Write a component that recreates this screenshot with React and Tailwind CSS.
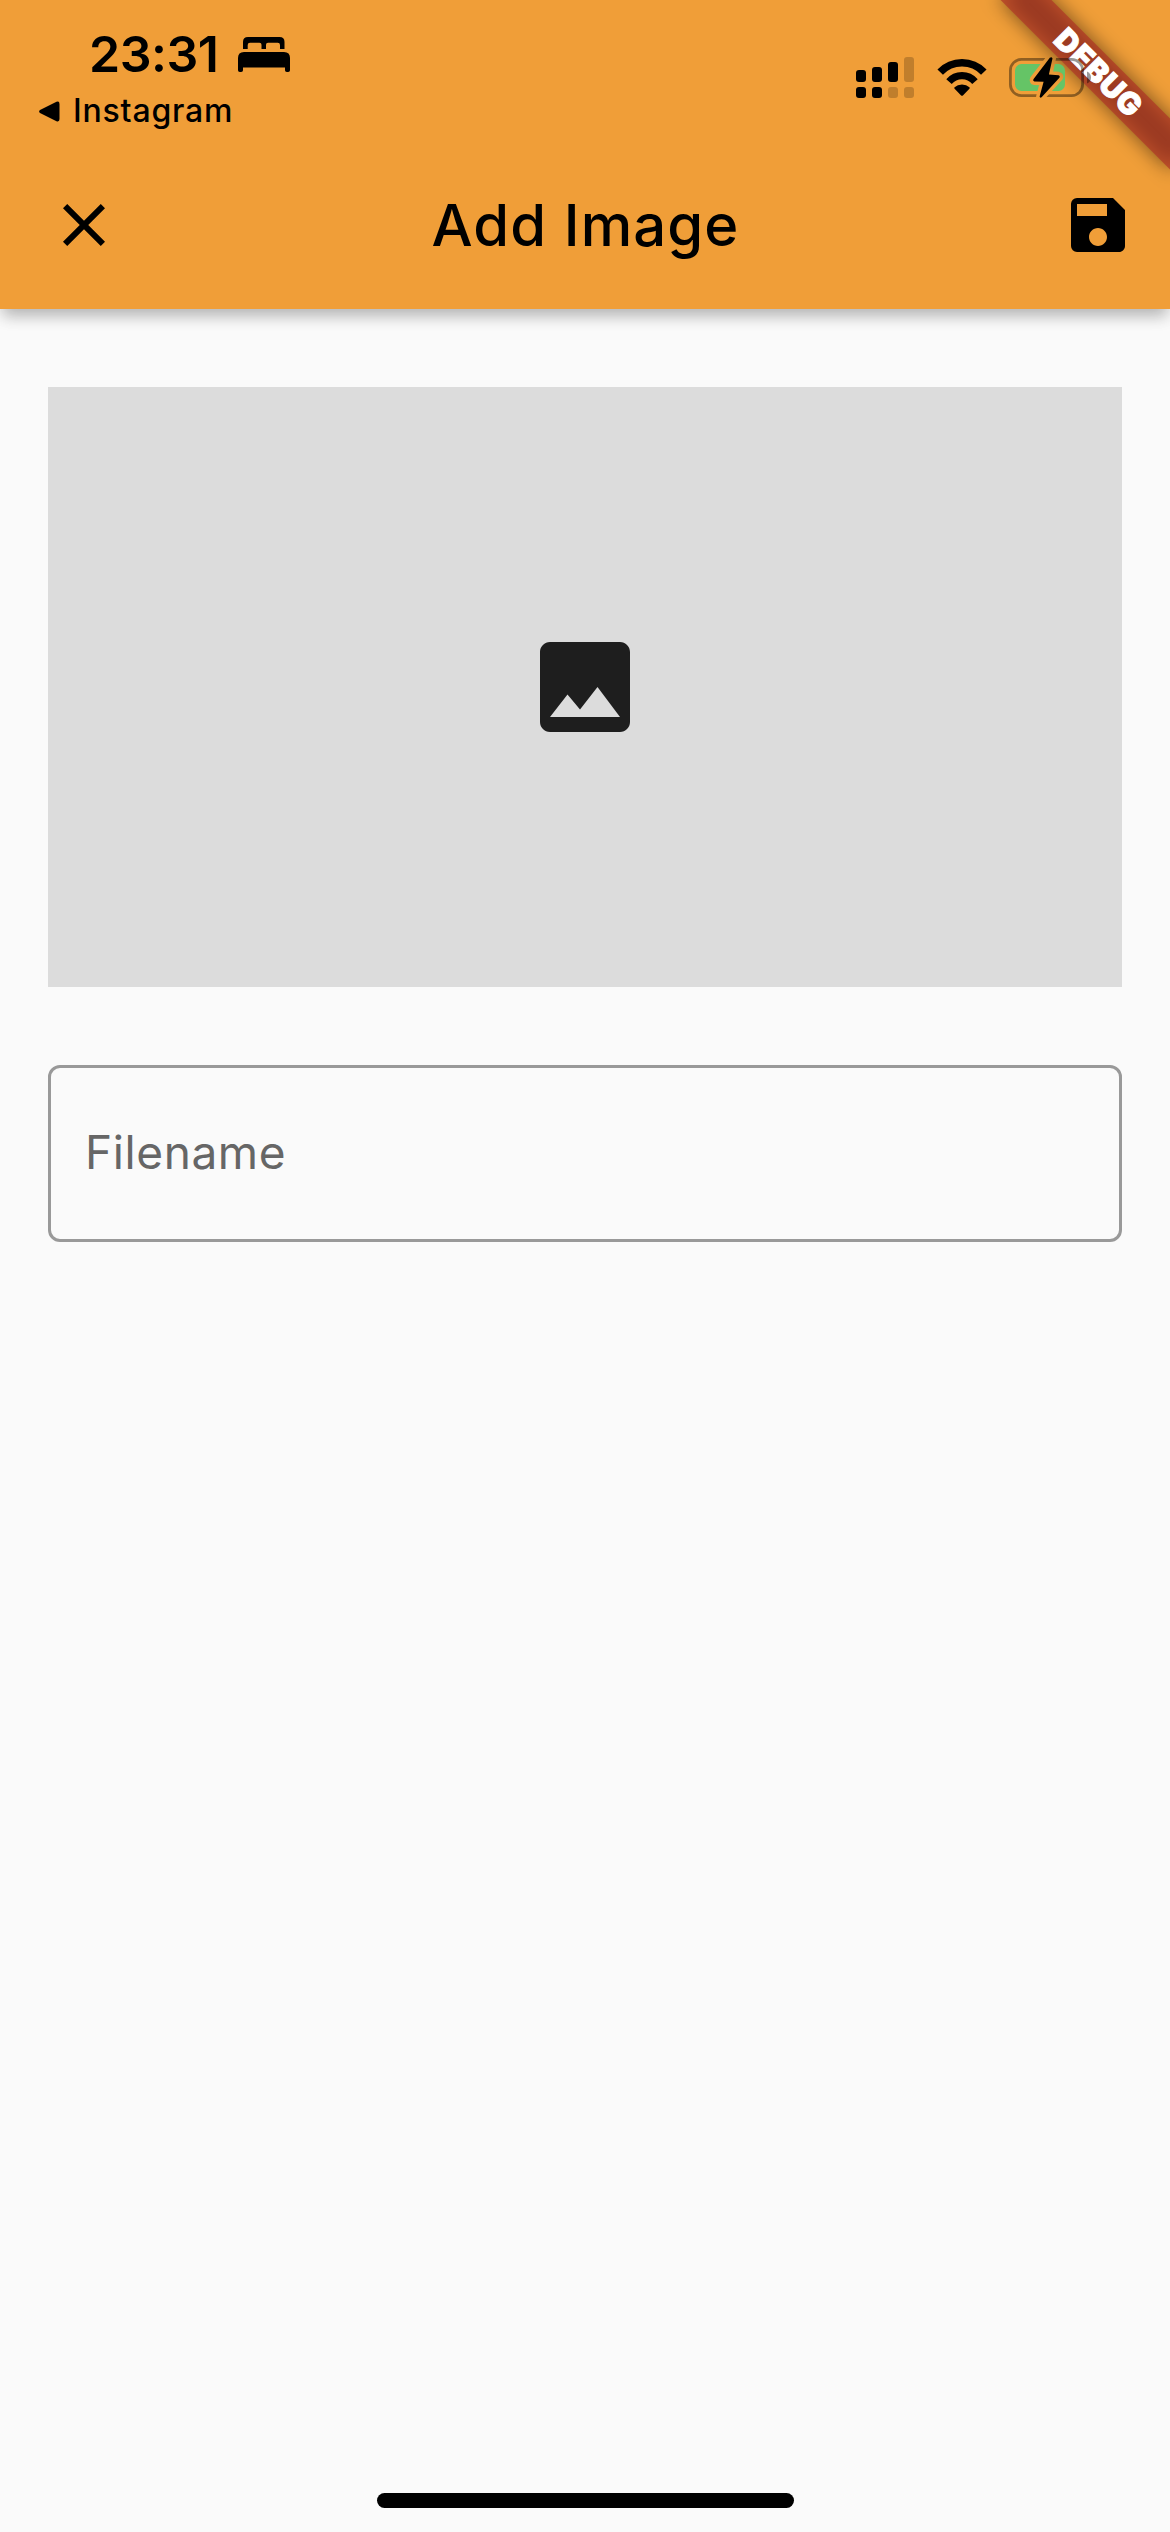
import React from "react";
import { MdClose, MdSave, MdImage } from "react-icons/md";

function BedIcon() {
  return (
    <svg width="52" height="36" viewBox="0 0 52 36" fill="#000" className="mt-px">
      <path d="M5 12V5q0-5 5-5h31.500q5 0 5 5v7h-4.500V8q0-2.300-2.300-2.300H30q-2 0-2 2V12h-4.500V7.700q0-2-2-2H12Q9.700 5.700 9.700 8v4z" />
      <path d="M0 21q0-6 6-6h40q6 0 6 6v12.200q0 1.800-1.800 1.800h-1.400q-1.800 0-1.800-1.800V30.500H5v2.700Q5 35 3.200 35H1.800Q0 35 0 33.200z" />
    </svg>
  );
}

function SignalIcon() {
  return (
    <svg width="58" height="42" viewBox="0 0 58 42" fill="#000">
      <rect x="0" y="13" width="10" height="12" rx="3" />
      <rect x="16" y="10" width="10" height="15" rx="3" />
      <rect x="32" y="5" width="10" height="20" rx="3" />
      <rect x="48" y="0" width="10" height="25" rx="3" opacity="0.2" />
      <rect x="0" y="30" width="10" height="11" rx="3" />
      <rect x="16" y="30" width="10" height="11" rx="3" />
      <rect x="32" y="30" width="10" height="11" rx="3" opacity="0.2" />
      <rect x="48" y="30" width="10" height="11" rx="3" opacity="0.2" />
    </svg>
  );
}

function WifiIcon() {
  return (
    <svg width="50" height="38" viewBox="0 0 50 38" className="overflow-visible">
      <path d="M3.200 13.200A30 30 0 0 1 46.800 13.200" fill="none" stroke="#000" strokeWidth="7.600" />
      <path d="M12 22.600A17.200 17.200 0 0 1 38 22.600" fill="none" stroke="#000" strokeWidth="7.200" />
      <path d="M17.600 28.200Q20.500 25.400 25 25.400t7.400 2.800q.8.700 0 1.500l-6.500 6.700q-.9.900-1.800 0l-6.500-6.700q-.8-.8 0-1.500z" />
    </svg>
  );
}

const bolt =
  "M40.800 0.800L24.400 22.200Q23.600 24.300 25.400 24.500L34.600 24.700L30.600 39.600Q30.900 41.300 32.600 40.200L50.600 20.400Q51.300 18.700 49.600 18.300L39.900 17.500L43.500 1.500Q42.800 -0.500 40.800 0.800Z";

function BatteryIcon() {
  return (
    <svg width="82" height="42" viewBox="0 0 82 42" className="overflow-visible">
      <mask id="bolt-gap" maskUnits="userSpaceOnUse" x="-5" y="-5" width="95" height="55">
        <rect x="-5" y="-5" width="95" height="55" fill="#fff" />
        <path d={bolt} fill="#000" stroke="#000" strokeWidth="7" strokeLinejoin="round" />
      </mask>
      <g mask="url(#bolt-gap)">
        <rect x="1.400" y="2.400" width="72.200" height="36.200" rx="11" fill="none" stroke="#000" strokeOpacity="0.4" strokeWidth="2.800" />
        <rect x="6" y="7" width="50" height="27" rx="6.500" fill="#65c466" />
      </g>
      <path d="M78 14.500q4 1.800 4 6t-4 6z" fill="#000" opacity="0.4" />
      <path d={bolt} fill="#000" />
    </svg>
  );
}

function DebugBanner() {
  return (
    <div className="absolute left-[978px] top-[54px] z-10 flex h-9 w-60 rotate-45 items-center justify-center">
      <div className="absolute inset-0 bg-black/50 blur-[10px]" />
      <div className="absolute inset-0 bg-[#af2c25]/63" />
      <span className="relative pl-0.5 text-[30.600px] font-black leading-9 tracking-[0.700px] text-white [-webkit-text-stroke:1px_white]">
        DEBUG
      </span>
    </div>
  );
}

function StatusBar() {
  return (
    <div className="flex h-[141px] justify-between">
      <div className="flex flex-col pt-6">
        <div className="flex h-[60px] items-center pl-[89px]">
          <span className="w-[149px] text-[50px] font-semibold leading-[60px] tracking-[-0.500px]">23:31</span>
          <BedIcon />
        </div>
        <div className="flex h-[54px] items-center pl-[39px]">
          <svg width="21" height="21" viewBox="0 0 21 21">
            <path d="M1 9L17.500.8Q20.500-.2 20.500 3v15q0 3.200-3 2.200L1 12Q-.8 10.500 1 9z" />
          </svg>
          <span className="ml-[13px] text-[32px] font-medium leading-[54px] tracking-[0.800px]">Instagram</span>
        </div>
      </div>
      <div className="relative z-20 flex items-start pr-[79px] pt-[57px]">
        <SignalIcon />
        <div className="ml-[23px] mt-[2px]"><WifiIcon /></div>
        <div className="ml-[22px]"><BatteryIcon /></div>
      </div>
    </div>
  );
}

export default function App() {
  return (
    <div className="relative flex h-[2532px] w-[1170px] flex-col overflow-hidden bg-[#fafafa] font-[Inter,sans-serif] text-black">
      <header className="h-[309px] bg-[#f09e38] shadow-[0_10px_14px_-3px_rgba(0,0,0,0.24),0_4px_20px_0_rgba(0,0,0,0.07)]">
        <StatusBar />
        <div className="flex h-[168px] items-center justify-between pl-12 pr-9">
          <MdClose size={72} />
          <h1 className="mr-[11px] text-[58px] font-medium leading-[72px] tracking-[1.100px]">Add Image</h1>
          <MdSave size={72} />
        </div>
      </header>
      <DebugBanner />
      <main className="flex grow flex-col px-12 pt-[78px]">
        <div className="flex h-[600px] items-center justify-center bg-[#dcdcdc] text-[#1e1e1e]">
          <MdImage size={120} />
        </div>
        <label className="mt-[78px] flex h-[177px] items-center rounded-xl border-[3px] border-[#999] pb-0.5 pl-[34px] text-[46px] tracking-[0.600px] text-[#666]">
          Filename
        </label>
      </main>
      <div className="mx-auto mb-6 h-[15px] w-[417px] rounded-full bg-black" />
    </div>
  );
}
